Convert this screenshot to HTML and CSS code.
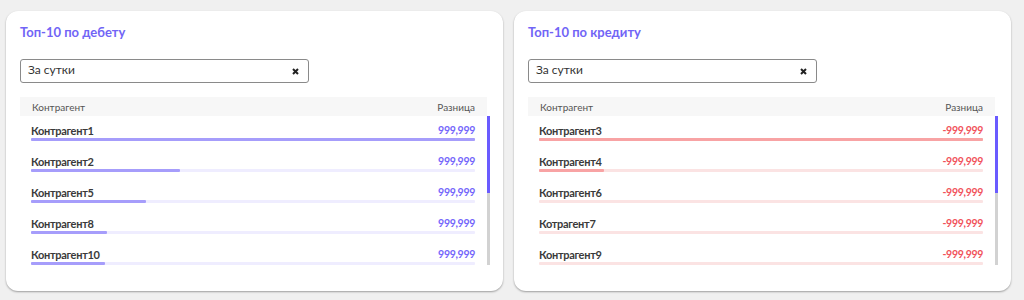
FILE: index.html
```html
<!DOCTYPE html>
<html lang="ru">
<head>
<meta charset="utf-8">
<title>Топ-10</title>
<link rel="stylesheet" href="styles.css">
</head>
<body>
<div class="board">
  <section class="card">
    <h2 class="card-title">Топ-10 по дебету</h2>
    <div class="select">
      <span class="select-text">За сутки</span>
      <svg class="select-clear" width="7" height="7" viewBox="0 0 7 7"><path d="M1 1L6 6M6 1L1 6" stroke="#222" stroke-width="2"/></svg>
    </div>
    <div class="table">
      <div class="table-head"><span>Контрагент</span><span>Разница</span></div>
      <div class="table-body">
        <div class="rows">
          <div class="row debit"><div class="row-line"><span class="name">Контрагент1</span><span class="val">999,999</span></div><div class="track"><div class="fill" style="width:100%"></div></div></div>
          <div class="row debit"><div class="row-line"><span class="name">Контрагент2</span><span class="val">999,999</span></div><div class="track"><div class="fill" style="width:33.6%"></div></div></div>
          <div class="row debit"><div class="row-line"><span class="name">Контрагент5</span><span class="val">999,999</span></div><div class="track"><div class="fill" style="width:25.9%"></div></div></div>
          <div class="row debit"><div class="row-line"><span class="name">Контрагент8</span><span class="val">999,999</span></div><div class="track"><div class="fill" style="width:17.1%"></div></div></div>
          <div class="row debit"><div class="row-line"><span class="name">Контрагент10</span><span class="val">999,999</span></div><div class="track"><div class="fill" style="width:16.7%"></div></div></div>
        </div>
        <div class="scroll"><div class="thumb"></div></div>
      </div>
    </div>
  </section>
  <section class="card">
    <h2 class="card-title">Топ-10 по кредиту</h2>
    <div class="select">
      <span class="select-text">За сутки</span>
      <svg class="select-clear" width="7" height="7" viewBox="0 0 7 7"><path d="M1 1L6 6M6 1L1 6" stroke="#222" stroke-width="2"/></svg>
    </div>
    <div class="table">
      <div class="table-head"><span>Контрагент</span><span>Разница</span></div>
      <div class="table-body">
        <div class="rows">
          <div class="row credit"><div class="row-line"><span class="name">Контрагент3</span><span class="val">-999,999</span></div><div class="track"><div class="fill" style="width:100%"></div></div></div>
          <div class="row credit"><div class="row-line"><span class="name">Контрагент4</span><span class="val">-999,999</span></div><div class="track"><div class="fill" style="width:14.6%"></div></div></div>
          <div class="row credit"><div class="row-line"><span class="name">Контрагент6</span><span class="val">-999,999</span></div><div class="track"><div class="fill" style="width:0%"></div></div></div>
          <div class="row credit"><div class="row-line"><span class="name">Котрагент7</span><span class="val">-999,999</span></div><div class="track"><div class="fill" style="width:0%"></div></div></div>
          <div class="row credit"><div class="row-line"><span class="name">Контрагент9</span><span class="val">-999,999</span></div><div class="track"><div class="fill" style="width:0%"></div></div></div>
        </div>
        <div class="scroll"><div class="thumb"></div></div>
      </div>
    </div>
  </section>
</div>
</body>
</html>
```
FILE: styles.css
```css
* { box-sizing: border-box; }
html, body { margin: 0; padding: 0; }
body {
  background: #f0f0f0;
  font-family: "Lato", "Noto Sans", sans-serif;
  color: #333;
  width: 1024px;
  height: 300px;
  overflow: hidden;
}
.board {
  display: flex;
  gap: 11px;
  padding: 11px 0 0 6px;
}
.card {
  width: 497px;
  height: 280px;
  background: #fff;
  border-radius: 12px;
  box-shadow: 0 1px 2px rgba(0,0,0,0.35);
  padding: 13px 13px 0 14px;
}
.card-title {
  margin: 0;
  font-size: 13px;
  line-height: 16px;
  font-weight: 700;
  color: #7165f6;
}
.select {
  margin-top: 19px;
  width: 289px;
  height: 24px;
  border: 1px solid #8a8a8a;
  border-radius: 3px;
  display: flex;
  align-items: center;
  justify-content: space-between;
  padding: 0 9px 0 7px;
}
.select-text {
  font-size: 12px;
  line-height: 14px;
  margin-top: -2px;
  color: #333;
}
.select-clear { display: block; }
.table {
  margin-top: 14px;
  width: 470px;
}
.table-head {
  width: 467px;
  height: 19px;
  background: #f7f7f7;
  display: flex;
  justify-content: space-between;
  align-items: center;
  padding: 0 12px 0 12px;
  font-size: 10px;
  color: #555;
}
.table-body {
  display: flex;
  height: 151px;
  overflow: hidden;
}
.rows {
  width: 467px;
  padding: 0 12px 0 11px;
}
.row {
  padding: 7px 0 6px;
}
.row-line {
  display: flex;
  justify-content: space-between;
  align-items: center;
  height: 14px;
  margin-bottom: 1px;
}
.name {
  font-size: 11px;
  font-weight: 700;
  letter-spacing: -0.3px;
  color: #3a3a3a;
}
.val {
  font-size: 10.5px;
  font-weight: 700;
  letter-spacing: -0.3px;
}
.track {
  height: 3px;
  border-radius: 1px;
}
.fill {
  height: 3px;
  border-radius: 1px;
}
.debit .val { color: #7466fb; }
.debit .track { background: #efedff; }
.debit .fill { background: #a69dfb; }
.credit .val { color: #f1535b; }
.credit .track { background: #fbe3e3; }
.credit .fill { background: #f8a3a4; }
.scroll {
  width: 3px;
  height: 150px;
  margin-top: -1px;
  background: #d2d2d2;
}
.thumb {
  height: 78px;
  background: #6a5bff;
}
```
